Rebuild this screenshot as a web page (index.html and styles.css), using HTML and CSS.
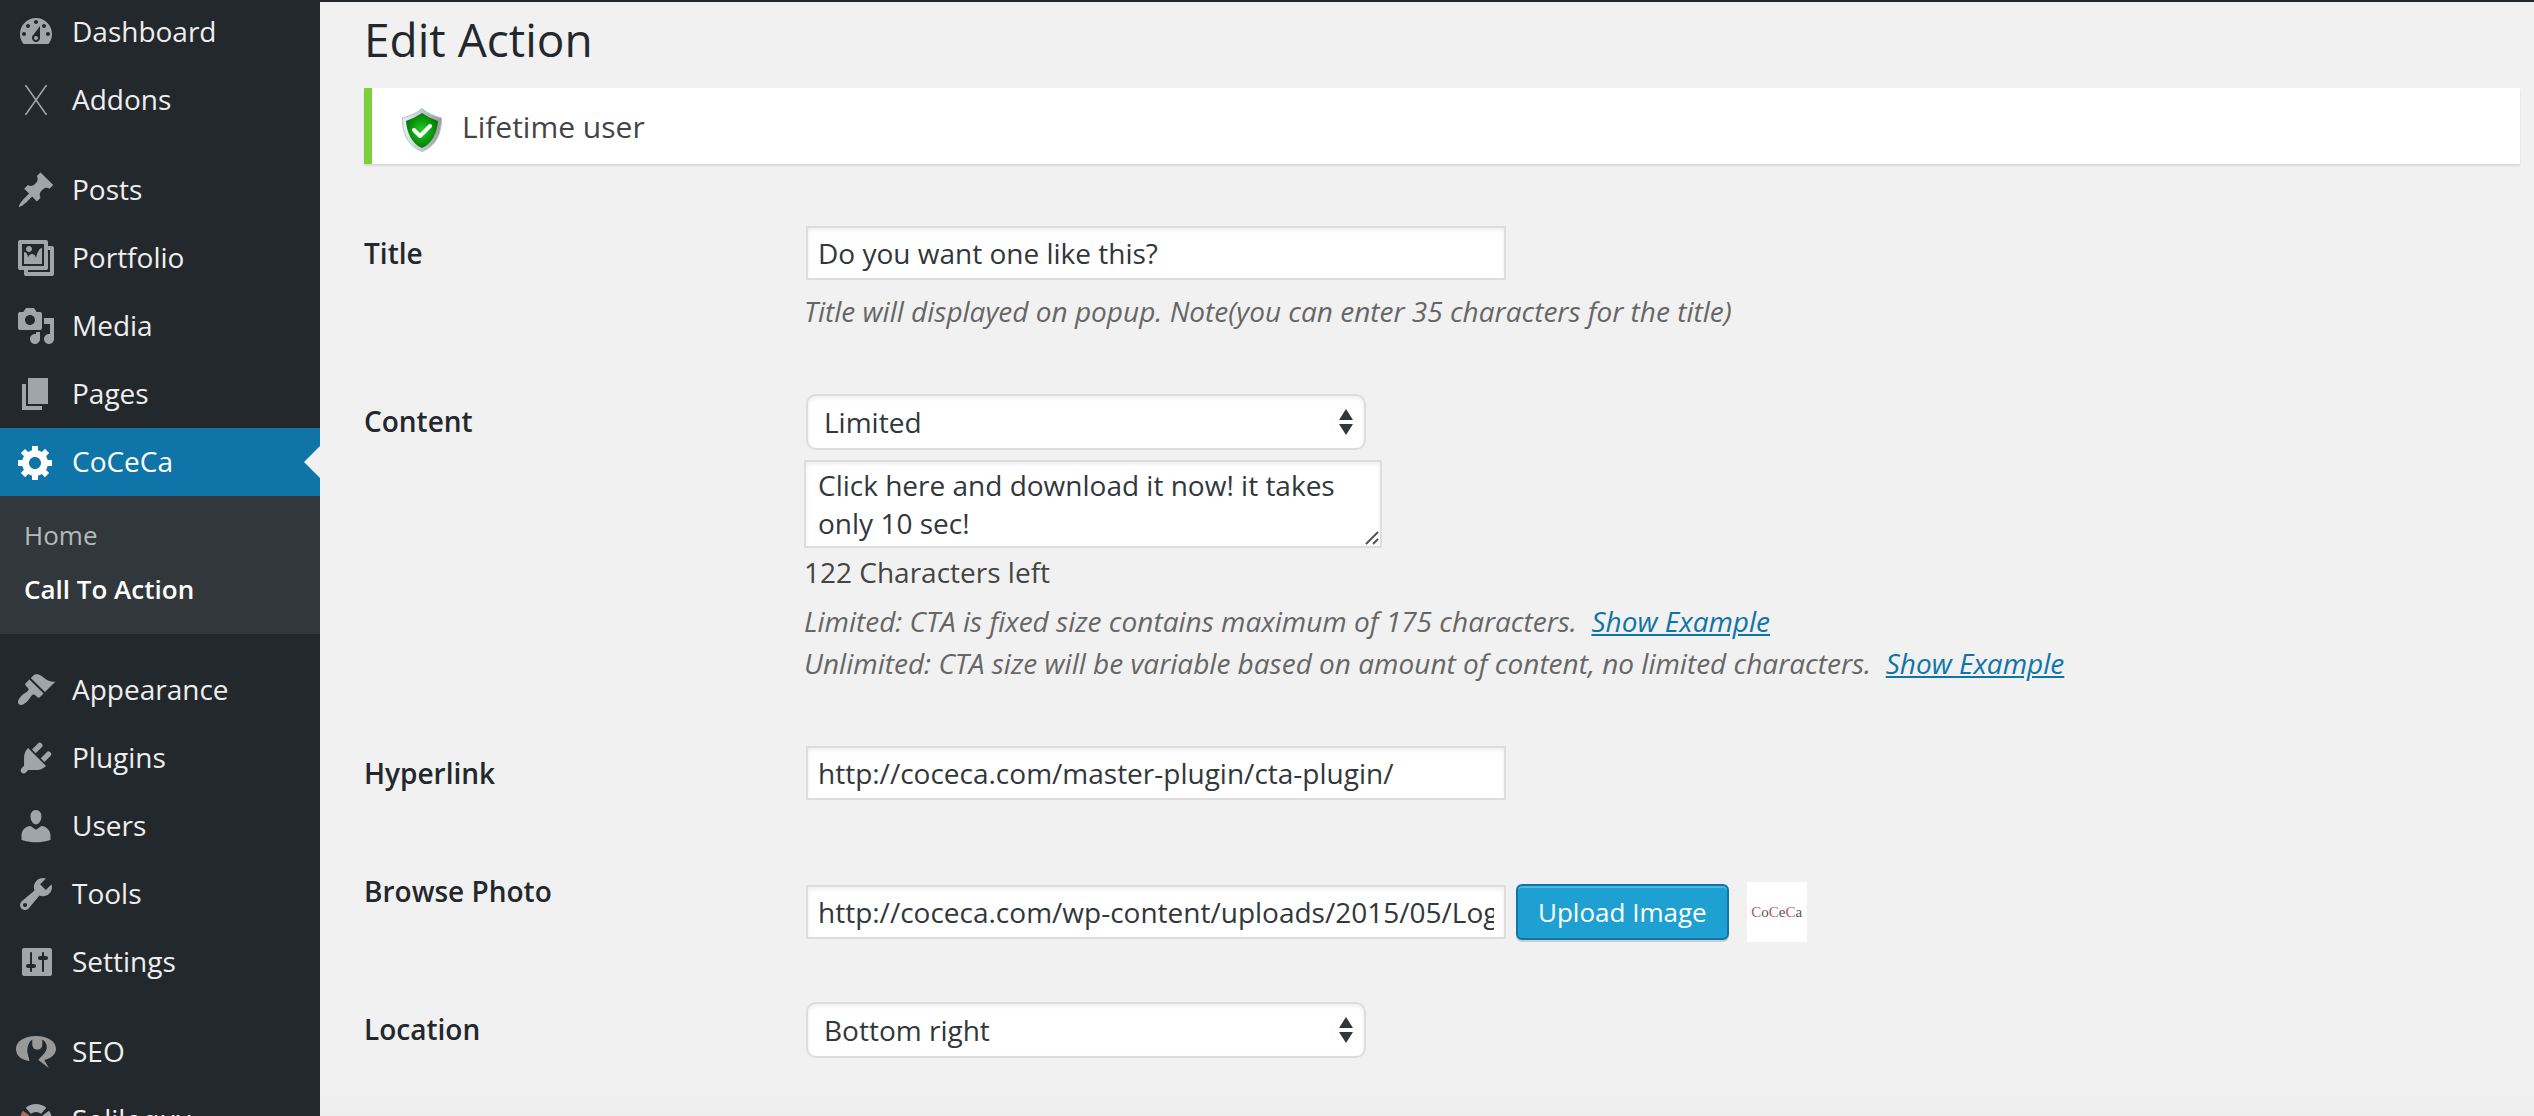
FILE: index.html
```html
<!DOCTYPE html>
<html lang="en">
<head>
<meta charset="utf-8">
<title>Edit Action</title>
<link rel="stylesheet" href="styles.css">
</head>
<body>
<div class="layout">
  <nav class="menu" aria-label="Main menu">
    <ul class="menu-list">
      <li><a class="item" href="#"><svg class="icon" viewBox="0 0 20 20"><path fill-rule="evenodd" d="M3.76 16h12.48c1.1-1.37 1.76-3.11 1.76-5 0-4.42-3.58-8-8-8s-8 3.58-8 8c0 1.89.66 3.63 1.76 5zM10 4c.55 0 1 .45 1 1s-.45 1-1 1-1-.45-1-1 .45-1 1-1zM6 6c.55 0 1 .45 1 1s-.45 1-1 1-1-.45-1-1 .45-1 1-1zm8 0c.55 0 1 .45 1 1s-.45 1-1 1-1-.45-1-1 .45-1 1-1zm-5.37 5.55L12 7v6c0 1.1-.9 2-2 2s-2-.9-2-2c0-.57.24-1.08.63-1.45zM4 10c.55 0 1 .45 1 1s-.45 1-1 1-1-.45-1-1 .45-1 1-1zm12 0c.55 0 1 .45 1 1s-.45 1-1 1-1-.45-1-1 .45-1 1-1zm-5 3c0-.55-.45-1-1-1s-1 .45-1 1 .45 1 1 1 1-.45 1-1z"/></svg>Dashboard</a></li>
      <li><a class="item" href="#"><svg class="icon" viewBox="0 0 20 20"><path fill="none" stroke="currentColor" stroke-width=".8" d="M4.500 2.900h.5L15 17.100h.5M15.500 2.900H15L5 17.100h-.5"/></svg>Addons</a></li>
      <li class="gap"><a class="item" href="#"><svg class="icon" viewBox="0 0 20 20"><path d="M10.44 3.02l1.82-1.82 6.36 6.35-1.83 1.82c-1.05-.68-2.48-.57-3.41.36l-.75.75c-.92.93-1.04 2.35-.35 3.41l-1.83 1.82-2.41-2.41-2.8 2.79c-.42.42-3.38 2.71-3.8 2.29s1.86-3.39 2.28-3.81l2.79-2.79L4.1 9.36l1.83-1.82c1.05.69 2.48.57 3.4-.36l.75-.75c.93-.92 1.05-2.35.36-3.41z"/></svg>Posts</a></li>
      <li><a class="item" href="#"><svg class="icon" viewBox="0 0 20 20"><path fill-rule="evenodd" d="M16 4h1.96c.57 0 1.04.47 1.04 1.04v12.92c0 .57-.47 1.04-1.04 1.04H5.04C4.47 19 4 18.53 4 17.96V16H2.04C1.47 16 1 15.53 1 14.96V2.04C1 1.47 1.47 1 2.04 1h12.92c.57 0 1.04.47 1.04 1.04V4zM3 14h11V3H3v11zm5-8.5C8 4.67 7.33 4 6.5 4S5 4.67 5 5.5 5.67 7 6.5 7 8 6.33 8 5.5zm2 4.5s1-5 3-5v8H4V7c2 0 2 3 2 3s.33-2 2-2 2 2 2 2zm7 7V6h-1v8.96c0 .57-.47 1.04-1.04 1.04H6v1h11z"/></svg>Portfolio</a></li>
      <li><a class="item" href="#"><svg class="icon" viewBox="0 0 20 20"><path fill-rule="evenodd" d="M13 11V4c0-.55-.45-1-1-1h-1.67L9 1H5L3.67 3H2c-.55 0-1 .45-1 1v7c0 .55.45 1 1 1h10c.55 0 1-.45 1-1zM7 4.5c1.38 0 2.5 1.12 2.5 2.5S8.38 9.5 7 9.5 4.5 8.38 4.5 7 5.62 4.5 7 4.5zM14 6h5v10.5c0 1.38-1.12 2.5-2.5 2.5S14 17.88 14 16.5s1.12-2.5 2.5-2.5c.17 0 .34.02.5.05V9h-3V6zm-4 8.05V13h2v3.5c0 1.38-1.12 2.5-2.5 2.5S7 17.88 7 16.5 8.12 14 9.5 14c.17 0 .34.02.5.05z"/></svg>Media</a></li>
      <li><a class="item" href="#"><svg class="icon" viewBox="0 0 20 20"><path d="M6 15V2h10v13H6zm-1 1h8v2H3V5h2v11z"/></svg>Pages</a></li>
      <li>
        <a class="item current" href="#"><svg class="icon" viewBox="0 0 20 20"><path fill-rule="evenodd" d="M18 12h-2.18c-.17.7-.44 1.35-.81 1.93l1.54 1.54-2.1 2.1-1.54-1.54c-.58.36-1.23.63-1.91.79V19H8v-2.18c-.68-.16-1.33-.43-1.91-.79l-1.54 1.54-2.12-2.12 1.54-1.54c-.36-.58-.63-1.23-.79-1.91H1V9.03h2.17c.16-.7.44-1.35.8-1.94L2.43 5.55l2.1-2.1 1.54 1.54c.58-.37 1.24-.64 1.93-.81V2h3v2.18c.68.16 1.33.43 1.91.79l1.54-1.54 2.12 2.12-1.54 1.54c.36.59.64 1.24.8 1.94H18V12zm-8.5 1.5c1.66 0 3-1.34 3-3s-1.34-3-3-3-3 1.34-3 3 1.34 3 3 3z"/></svg>CoCeCa</a>
        <ul class="submenu">
          <li><a href="#">Home</a></li>
          <li><a class="active" href="#">Call To Action</a></li>
        </ul>
      </li>
      <li class="gap"><a class="item" href="#"><svg class="icon" viewBox="0 0 20 20"><path d="M14.48 11.06L7.41 3.99l1.5-1.5c.5-.56 2.3-.47 3.51.32 1.21.8 1.43 1.28 2.91 2.1 1.18.64 2.45 1.26 4.45.85zm-.71.71L6.7 4.7 4.93 6.47c-.39.39-.39 1.02 0 1.41l1.06 1.06c.39.39.39 1.03 0 1.42-.6.6-1.43 1.11-2.21 1.69-.35.26-.7.53-1.01.84C1.43 14.23.4 16.08 1.4 17.07c.99 1 2.84-.03 4.18-1.36.31-.31.58-.66.85-1.02.57-.78 1.08-1.61 1.69-2.21.39-.39 1.02-.39 1.41 0l1.06 1.06c.39.39 1.02.39 1.41 0z"/></svg>Appearance</a></li>
      <li><a class="item" href="#"><svg class="icon" viewBox="0 0 20 20"><path d="M13.11 4.36L9.87 7.6 8 5.73l3.24-3.24c.35-.34 1.05-.2 1.56.32.52.51.66 1.21.31 1.55zm-8 1.77l.91-1.12 9.01 9.01-1.19.84c-.71.71-2.63 1.16-3.82 1.16H6.14L4.9 17.26c-.59.59-1.54.59-2.12 0-.59-.58-.59-1.53 0-2.12l1.24-1.24v-3.88c0-1.13.4-3.19 1.09-3.89zm7.26 3.97l3.24-3.24c.34-.35 1.04-.21 1.55.31.52.51.66 1.21.31 1.55l-3.24 3.25z"/></svg>Plugins</a></li>
      <li><a class="item" href="#"><svg class="icon" viewBox="0 0 20 20"><path d="M10 9.25c-2.27 0-2.73-3.44-2.73-3.44C7 4.02 7.82 2 9.97 2c2.16 0 2.98 2.02 2.71 3.81 0 0-.41 3.44-2.68 3.44zm0 2.57L12.72 10c2.39 0 4.52 2.33 4.52 4.53v2.49s-3.65 1.13-7.24 1.13c-3.65 0-7.24-1.13-7.24-1.13v-2.49c0-2.25 1.94-4.48 4.47-4.48z"/></svg>Users</a></li>
      <li><a class="item" href="#"><svg class="icon" viewBox="0 0 20 20"><path fill-rule="evenodd" d="M16.68 9.77c-1.34 1.34-3.3 1.67-4.95.99l-5.41 6.52c-.99.99-2.59.99-3.58 0s-.99-2.59 0-3.57l6.52-5.42c-.68-1.65-.35-3.61.99-4.95 1.28-1.28 3.12-1.62 4.72-1.06l-2.89 2.89 2.82 2.82 2.86-2.87c.53 1.58.18 3.39-1.08 4.65zM3.81 16.21c.4.39 1.04.39 1.43 0 .4-.4.4-1.04 0-1.43-.39-.4-1.03-.4-1.43 0-.39.39-.39 1.03 0 1.43z"/></svg>Tools</a></li>
      <li><a class="item" href="#"><svg class="icon" viewBox="0 0 20 20"><path fill-rule="evenodd" d="M18 16V4c0-.55-.45-1-1-1H4c-.55 0-1 .45-1 1v12c0 .55.45 1 1 1h13c.55 0 1-.45 1-1zM8 11h1c.55 0 1 .45 1 1s-.45 1-1 1H8v1.5c0 .28-.22.5-.5.5s-.5-.22-.5-.5V13H6c-.55 0-1-.45-1-1s.45-1 1-1h1V5.5c0-.28.22-.5.5-.5s.5.22.5.5V11zm5-2h-1c-.55 0-1-.45-1-1s.45-1 1-1h1V5.5c0-.28.22-.5.5-.5s.5.22.5.5V7h1c.55 0 1 .45 1 1s-.45 1-1 1h-1v5.5c0 .28-.22.5-.5.5s-.5-.22-.5-.5V9z"/></svg>Settings</a></li>
      <li class="gap"><a class="item" href="#"><svg class="icon seo" viewBox="0 0 40 40"><path d="M20 4C8 4 0 9.5 0 17c0 6.500 5 11 13.500 12-.5-4-2.300-7-2.200-11 .2-5 2-8.500 5-10.500v5c0 3 2 5 5 5s5-2 5-5v-5c2.500 1.500 4.500 4 4.500 8-.5 5-4.800 8-8.500 12.500l10.500 8-4.500-8c7-1.500 11.700-6 11.700-11C40 9.500 32 4 20 4z"/></svg>SEO</a></li>
      <li><a class="item" href="#"><svg class="icon" viewBox="0 0 40 40"><g fill="none" stroke-width="8"><path stroke="currentColor" d="M12.300 10.800A12 12 0 0 1 27.700 10.800M29.800 13.100A12 12 0 0 1 32 20"/><path stroke="#b5675c" d="M10.200 13.100A12 12 0 0 0 8 20"/></g></svg>Soliloquy</a></li>
    </ul>
  </nav>

  <main class="content">
    <h1>Edit Action</h1>
    <div class="notice">
      <svg class="shield" viewBox="0 0 40 44">
        <defs>
          <radialGradient id="green"><stop offset="0" stop-color="#1fd11f"/><stop offset="1" stop-color="#067a06"/></radialGradient>
          <linearGradient id="rim"><stop offset="0" stop-color="#e8f4f8"/><stop offset="1" stop-color="#9a9a9a"/></linearGradient>
        </defs>
        <path fill="url(#rim)" stroke="#a9c4cf" d="M20 .5C15 5 8 8 .5 10c0 15 5 28 19.500 33.500C34.500 38 39.500 25 39.500 10 32 8 25 5 20 .5z"/>
        <path fill="url(#green)" d="M20 5C15 8 10 11 4 13c1 12 6 23 16 27 10-4 15-15 16-27-6-2-11-5-16-8z"/>
        <path fill="none" stroke="#fff" stroke-width="4" stroke-linecap="round" stroke-linejoin="round" d="M12 22l6 6 10-10"/>
      </svg>
      <p>Lifetime user</p>
    </div>

    <form class="form">
      <div class="row">
        <label for="title">Title</label>
        <div class="field">
          <input class="text" id="title" type="text" value="Do you want one like this?">
          <p class="hint">Title will displayed on popup. Note(you can enter 35 characters for the title)</p>
        </div>
      </div>
      <div class="row">
        <label for="content">Content</label>
        <div class="field">
          <span class="select"><select id="content"><option>Limited</option><option>Unlimited</option></select><svg viewBox="0 0 14 26"><path d="M7 0l7 11H0zM0 15h14L7 26z"/></svg></span>
          <span class="area"><textarea aria-label="Content text" rows="2">Click here and download it now! it takes only 10 sec!</textarea><svg viewBox="0 0 14 14"><path d="M1 13L13 1M8 13l5-5"/></svg></span>
          <p class="count">122 Characters left</p>
          <p class="hint">Limited: CTA is fixed size contains maximum of 175 characters.&nbsp; <a href="#">Show Example</a><br>Unlimited: CTA size will be variable based on amount of content, no limited characters.&nbsp; <a href="#">Show Example</a></p>
        </div>
      </div>
      <div class="row">
        <label for="link">Hyperlink</label>
        <div class="field single"><input class="text" id="link" type="text" value="http://coceca.com/master-plugin/cta-plugin/"></div>
      </div>
      <div class="row">
        <label for="photo">Browse Photo</label>
        <div class="field upload">
          <input class="text" id="photo" type="text" value="http://coceca.com/wp-content/uploads/2015/05/Logo.png">
          <button class="button" type="button">Upload Image</button>
          <span class="thumb"><span><b>C</b>o<b>C</b>e<b>C</b>a</span></span>
        </div>
      </div>
      <div class="row">
        <label for="location">Location</label>
        <div class="field">
          <span class="select"><select id="location"><option>Bottom right</option><option>Bottom left</option></select><svg viewBox="0 0 14 26"><path d="M7 0l7 11H0zM0 15h14L7 26z"/></svg></span>
        </div>
      </div>
    </form>
  </main>
</div>
</body>
</html>
```
FILE: styles.css
```css
* { box-sizing: border-box; }

body {
  margin: 0;
  background: #f1f1f1;
  color: #444;
  font: 28px/38px "Open Sans", sans-serif;
}

ul { margin: 0; padding: 0; list-style: none; }
p, h1 { margin: 0; }

.layout {
  display: flex;
  height: 100vh;
  overflow: hidden;
  border-top: 2px solid #23282d;
}

/* Sidebar */
.menu {
  flex: 0 0 320px;
  background: #23282d;
  overflow: hidden;
}
.menu-list { margin-top: -4px; }
.gap { margin-top: 22px; }
.item {
  display: flex;
  align-items: center;
  gap: 16px;
  height: 68px;
  padding: 0 0 2px 16px;
  color: #eee;
  text-decoration: none;
  position: relative;
}
.icon { width: 40px; height: 40px; margin-top: 2px; fill: currentColor; color: #a0a5aa; }
.seo { color: #999; }
.current { background: #0f74a8; color: #fff; }
.current .icon { color: #fff; }
.current::after {
  content: "";
  position: absolute;
  right: 0;
  top: 18px;
  border: 16px solid transparent;
  border-left: 0;
  border-right-color: #f1f1f1;
}
.submenu { padding: 12px 0 18px; background: #32373c; }
.submenu a {
  display: block;
  padding: 8px 24px;
  color: #b4b9be;
  font-size: 26px;
  text-decoration: none;
}
.submenu .active { color: #fff; font-weight: 600; }

/* Page */
.content {
  flex: 1;
  min-width: 0;
  padding: 7px 14px 0 44px;
  background: linear-gradient(to top, #eee, #f1f1f1 32px);
}
h1 { color: #23282d; font-size: 46px; font-weight: 400; line-height: 60px; }
.notice {
  display: flex;
  align-items: center;
  gap: 20px;
  height: 76px;
  margin: 19px 0 32px;
  padding-left: 30px;
  background: #fff;
  border-left: 8px solid #7ad03a;
  box-shadow: 0 2px 2px rgba(0, 0, 0, .1);
  font-size: 30px;
}
.notice p { padding-top: 2px; }
.shield { width: 40px; height: 44px; margin-top: 8px; }

/* Form */
.row { display: flex; }
.row > label {
  flex: 0 0 440px;
  padding: 39px 20px 39px 0;
  color: #23282d;
  font-weight: 600;
  line-height: 36px;
}
.field { flex: 1; min-width: 0; padding: 30px 0 32px; }
.single { padding-bottom: 34px; }
input, select, textarea, button { font: inherit; color: #32373c; }
.text, select, textarea {
  background: #fff;
  border: 2px solid #ddd;
  box-shadow: inset 0 2px 4px rgba(0, 0, 0, .07);
}
.text {
  display: block;
  width: 700px;
  height: 54px;
  margin-left: 2px;
  padding: 0 10px;
}
.hint { color: #666; font-style: italic; line-height: 42px; padding-top: 10px; }
.hint a { color: #0f74a8; }
.select { display: block; position: relative; width: 560px; margin-left: 2px; }
select {
  display: block;
  appearance: none;
  width: 100%;
  height: 56px;
  padding: 0 16px;
  border-radius: 10px;
}
.select svg { position: absolute; right: 13px; top: 15px; width: 14px; height: 26px; fill: #32373c; }
.area { display: block; position: relative; width: 578px; margin-top: 10px; }
textarea {
  display: block;
  width: 100%;
  height: 88px;
  padding: 4px 12px;
  resize: none;
  overflow: hidden;
}
.area svg { position: absolute; right: 3px; bottom: 3px; width: 14px; height: 14px; stroke: #555; stroke-width: 2; }
.count { padding-top: 6px; line-height: 36px; }
.upload { display: flex; align-items: center; padding: 48px 0 30px; }
.button {
  height: 56px;
  margin-left: 10px;
  padding: 0 20px;
  background: #1ea1d2;
  border: 2px solid #0f74a8;
  border-radius: 6px;
  box-shadow: inset 0 2px 0 #4ab8e0, 0 2px 0 rgba(0, 0, 0, .15);
  color: #fff;
  font-size: 26px;
}
.thumb {
  display: flex;
  align-items: center;
  justify-content: center;
  width: 60px;
  height: 60px;
  margin-left: 18px;
  background: #fff;
  color: #555;
  font: 15px/16px "Liberation Serif", serif;
}
.thumb b { color: #c0545c; font-weight: 400; }
```
